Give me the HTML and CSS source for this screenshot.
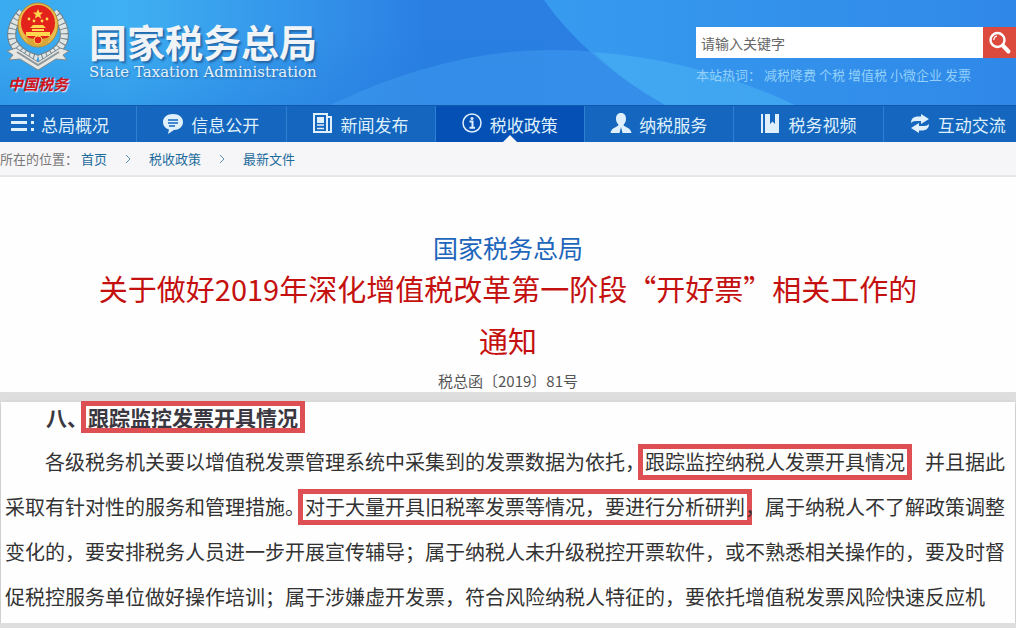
FILE: index.html
```html
<!DOCTYPE html>
<html lang="zh-CN">
<head>
    <meta charset="UTF-8">
    <meta name="viewport" content="width=device-width, initial-scale=1.0">
    <title>国家税务总局</title>
    <link rel="stylesheet" href="styles.css">
</head>
<body>
    <header class="header">
        <svg class="header-bg" viewBox="0 0 1016 105" preserveAspectRatio="none" aria-hidden="true">
            <defs>
                <linearGradient id="sky" x1="0" y1="0" x2="1" y2="0">
                    <stop offset="0" stop-color="#3aaaf0"/>
                    <stop offset="0.12" stop-color="#3fb0f2"/>
                    <stop offset="0.42" stop-color="#2b7fe3"/>
                    <stop offset="1" stop-color="#2b7fe3"/>
                </linearGradient>
                <linearGradient id="right" x1="0" y1="0" x2="1" y2="0">
                    <stop offset="0" stop-color="#379bef"/>
                    <stop offset="1" stop-color="#2f88e8"/>
                </linearGradient>
                <linearGradient id="shade" x1="0" y1="0" x2="0" y2="1">
                    <stop offset="0.3" stop-color="#1f78dc" stop-opacity="0"/>
                    <stop offset="1" stop-color="#1f78dc" stop-opacity="0.35"/>
                </linearGradient>
            </defs>
            <rect width="1016" height="105" fill="url(#sky)"/>
            <rect width="544" height="105" fill="url(#shade)"/>
            <path d="M544 0Q586 60 665 105H1016V0Z" fill="url(#right)"/>
            <path d="M330 105Q450 48 560 50Q578 50 594 52Q622 82 665 105Z" fill="#45a5f2" fill-opacity="0.4"/>
            <path d="M594 52Q700 60 795 105H665Q622 82 594 52Z" fill="#4db8f5" fill-opacity="0.5"/>
        </svg>
        <a class="brand" href="#">
            <span class="logo">
                <svg class="emblem" viewBox="0 0 66 70" aria-hidden="true">
                    <!-- wheat ears -->
                    <path d="M17 10Q3 26 8 40Q14 52 32 57" fill="none" stroke="#6f7f88" stroke-width="9"/>
                    <path d="M49 10Q63 26 58 40Q52 52 34 57" fill="none" stroke="#6f7f88" stroke-width="9"/>
                    <path d="M17 10Q3 26 8 40Q14 52 32 57" fill="none" stroke="#dfe4e4" stroke-width="7" stroke-dasharray="4 1"/>
                    <path d="M49 10Q63 26 58 40Q52 52 34 57" fill="none" stroke="#dfe4e4" stroke-width="7" stroke-dasharray="4 1"/>
                    <!-- ribbon -->
                    <path d="M2 49L11 46L33 60L55 46L64 49L58 53L62 58L51 57L33 68L15 57L4 58L8 53Z" fill="#e6e6e2" stroke="#7c8990" stroke-width="1"/>
                    <path d="M12 50L33 63L54 50" fill="none" stroke="#8d979b" stroke-width="2"/>
                    <!-- badge -->
                    <ellipse cx="33" cy="23" rx="20" ry="22" fill="#e9bd4c" stroke="#b98a2c" stroke-width="1"/>
                    <ellipse cx="33" cy="21" rx="17" ry="18" fill="#e3231b"/>
                    <path d="M33 7L34.4 10.6H38L35.2 12.9L36.2 16.5L33 14.4L29.8 16.5L30.8 12.9L28 10.6H31.6Z" fill="#ffd84f"/>
                    <g fill="#ffd84f">
                        <circle cx="24" cy="17" r="1.4"/>
                        <circle cx="29" cy="19" r="1.4"/>
                        <circle cx="37" cy="19" r="1.4"/>
                        <circle cx="42" cy="17" r="1.4"/>
                        <path d="M25 26L28 23H38L41 26ZM27 27H39V29H27ZM21 30H45V34H21Z"/>
                    </g>
                    <path d="M20 35Q33 39 46 35L42 42Q33 46 24 42Z" fill="#d9a63a"/>
                    <circle cx="33" cy="38" r="4" fill="#e3231b" stroke="#ffd84f" stroke-width="1"/>
                </svg>
                <span class="logo-text">中国税务</span>
            </span>
            <span class="site-name">
                <span class="site-name-cn">国家税务总局</span>
                <span class="site-name-en">State Taxation Administration</span>
            </span>
        </a>
        <div class="search">
            <form class="search-form">
                <input class="search-input" type="text" placeholder="请输入关键字" aria-label="请输入关键字">
                <button class="search-button" type="button" aria-label="搜索">
                    <svg width="24" height="24" viewBox="0 0 24 24" fill="none" stroke="#fff" aria-hidden="true">
                        <circle cx="9.5" cy="9" r="7" stroke-width="2.4"/>
                        <path d="M5.8 9Q6 5.6 9 5.2" stroke-width="1.2"/>
                        <path d="M14.8 14.5L20.5 20.5" stroke-width="4" stroke-linecap="round"/>
                    </svg>
                </button>
            </form>
            <div class="hot-words">
                <span>本站热词：</span>
                <a href="#">减税降费</a>
                <a href="#">个税</a>
                <a href="#">增值税</a>
                <a href="#">小微企业</a>
                <a href="#">发票</a>
            </div>
        </div>
    </header>

    <nav class="nav">
        <a class="nav-item" href="#">
            <svg class="nav-icon" viewBox="0 0 24 24" fill="currentColor"><path d="M0 2H16V5H0ZM0 9H16V12H0ZM0 16H16V19H0ZM20 2H23V5H20ZM20 9H23V12H20ZM20 16H23V19H20Z"/></svg>
            总局概况
        </a>
        <a class="nav-item" href="#">
            <svg class="nav-icon" viewBox="0 0 24 24"><path d="M12 2C18 2 22 5.5 22 10S18 18 13 18L7 22L8 17.5C4.5 16.5 2 13.8 2 10C2 5.5 6 2 12 2Z" fill="currentColor"/><path d="M7 8H17M7 11H17M8 14H14" stroke="#1466be" stroke-width="1.5"/></svg>
            信息公开
        </a>
        <a class="nav-item" href="#">
            <svg class="nav-icon" viewBox="0 0 24 24" fill="none" stroke="currentColor" stroke-width="2"><path d="M3 2H16V20H3ZM16 5H20V20H15"/><path d="M6 13H13M6 16.5H13" stroke-width="1.5"/><path d="M6 5H13V11H6Z" fill="currentColor" stroke="none"/></svg>
            新闻发布
        </a>
        <a class="nav-item active" href="#">
            <svg class="nav-icon" viewBox="0 0 24 24" fill="none" stroke="currentColor"><circle cx="12" cy="11" r="9" stroke-width="1.5"/><path d="M9.5 9.5H12.5V15.5M9.5 15.8H15" stroke-width="2"/><circle cx="12" cy="6.5" r="1.5" fill="currentColor" stroke="none"/></svg>
            税收政策
        </a>
        <a class="nav-item" href="#">
            <svg class="nav-icon" viewBox="0 0 24 24"><path d="M12 1C15.5 1 17 3.5 17 7C17 10 15.500 11.5 14.5 13C15 15 22 15.5 22.5 21H1.5C2 15.5 9 15 9.5 13C8.5 11.5 7 10 7 7C7 3.5 8.5 1 12 1Z" fill="currentColor"/><path d="M12 15L13.5 21H10.5Z" fill="#1466be"/></svg>
            纳税服务
        </a>
        <a class="nav-item" href="#">
            <svg class="nav-icon" viewBox="0 0 24 24" fill="currentColor"><path d="M3 2H5V21H3ZM7 2H12V12L14.5 9.5L17 12V2H21V21H7Z"/></svg>
            税务视频
        </a>
        <a class="nav-item" href="#">
            <svg class="nav-icon" viewBox="0 0 24 24" fill="currentColor"><path d="M3 11C3 6.500 6 4.5 10 4.500H13V2L21 7L13 12V9H10C7 9 5 9 3 11ZM21 12C21 16.500 18 18.500 14 18.500H11V21L3 16L11 11V14H14C17 14 19 14 21 12Z"/></svg>
            互动交流
        </a>
    </nav>

    <div class="breadcrumb">
        <span>所在的位置：</span>
        <a href="#">首页</a>
        <svg class="arrow" viewBox="0 0 8 10"><path d="M2 1L6 5L2 9"/></svg>
        <a href="#">税收政策</a>
        <svg class="arrow" viewBox="0 0 8 10"><path d="M2 1L6 5L2 9"/></svg>
        <a href="#">最新文件</a>
    </div>

    <main>
        <section class="title-block">
            <p class="issuer">国家税务总局</p>
            <h1>关于做好2019年深化增值税改革第一阶段“开好票”相关工作的通知</h1>
            <p class="doc-number">税总函〔2019〕81号</p>
        </section>

        <article class="article">
            <h2>八、<mark>跟踪监控发票开具情况</mark></h2>
            <p>各级税务机关要以增值税发票管理系统中采集到的发票数据为依托，<mark>跟踪监控纳税人发票开具情况</mark>　并且据此采取有针对性的服务和管理措施。<mark>对于大量开具旧税率发票等情况，要进行分析研判</mark>，属于纳税人不了解政策调整变化的，要安排税务人员进一步开展宣传辅导；属于纳税人未升级税控开票软件，或不熟悉相关操作的，要及时督促税控服务单位做好操作培训；属于涉嫌虚开发票，符合风险纳税人特征的，要依托增值税发票风险快速反应机</p>
        </article>
    </main>
</body>
</html>
```
FILE: styles.css
```css
* { box-sizing: border-box; }
body { margin: 0; font-family: "Noto Sans CJK SC", sans-serif; background-color: #dedede; color: #333; overflow-x: hidden; }
a { color: inherit; text-decoration: none; }
h1, h2, p { margin: 0; font-weight: normal; }

/* header */
.header { position: relative; display: flex; justify-content: space-between; height: 105px; }
.header-bg { position: absolute; top: 0; left: 0; width: 100%; height: 100%; z-index: -1; }
.brand { display: flex; gap: 18px; padding: 2px 0 0 5px; }
.logo { display: flex; flex-direction: column; align-items: center; width: 66px; }
.emblem { width: 66px; height: 70px; }
.logo-text { font-size: 15px; font-weight: bold; font-style: italic; line-height: 24px; color: #d3141c; text-shadow: 1px 1px 1px #ddeefa; }
.site-name { display: flex; flex-direction: column; padding-top: 18px; }
.site-name-cn { font-size: 38px; font-weight: bold; line-height: 42px; color: #f1f4f7; text-shadow: 2px 2px 2px #2468a8; }
.site-name-en { font-family: "DejaVu Serif", serif; font-size: 15px; line-height: 20px; color: #e4f1fb; text-shadow: 1px 1px 2px #2468a8; }

.search { width: 320px; padding-top: 27px; }
.search-form { display: flex; height: 31px; }
.search-input { flex: 1; min-width: 0; padding: 0 5px; border: 0; background-color: #fff; font-family: inherit; font-size: 14px; color: #555; }
.search-input::placeholder { color: #666; }
.search-button { display: flex; align-items: center; justify-content: center; width: 33px; padding: 0; border: 0; background-color: #dc4a3d; }
.hot-words { display: flex; gap: 3px; padding-top: 7px; font-size: 13px; line-height: 20px; color: #92d0fa; white-space: nowrap; }

/* nav */
.nav { display: grid; grid-template-columns: 136fr repeat(5, 149fr) 133fr; height: 37px; background-color: #1466be; border-top: 1px solid #1059ab; overflow: hidden; }
.nav-item { position: relative; display: flex; align-items: center; gap: 6px; padding-left: 24px; border-left: 1px solid #2f7fd0; font-size: 17px; color: #dff0fc; white-space: nowrap; }
.nav-item:first-child { padding-left: 11px; border-left: 0; }
.nav-icon { flex: none; width: 24px; height: 24px; }
.active { background-color: #0450b4; }
.active::after { content: ""; position: absolute; left: 50%; bottom: 0; margin-left: -7px; border: 7px solid transparent; border-top: 0; border-bottom-color: #f7f7f9; }

/* breadcrumb */
.breadcrumb { display: flex; align-items: center; height: 35px; background-color: #f6f6f8; border-bottom: 2px solid #e6e6e8; font-size: 13px; color: #777; }
.breadcrumb a { color: #1c6c9c; }
.breadcrumb span { padding-right: 3px; }
.arrow { width: 8px; height: 10px; margin: 0 17px; fill: none; stroke: #5c8fb0; }

/* document title */
.title-block { padding: 55px 88px 0; background-color: #fefefe; text-align: center; }
.issuer { font-size: 25px; line-height: 30px; color: #1d66bb; }
h1 { font-size: 29px; line-height: 52px; color: #c4100f; }
.doc-number { padding-top: 4px; font-size: 15px; line-height: 22px; color: #555; }

/* article */
.article { margin: 10px 1px 0; padding: 0 4px 4px; background-color: #fefefe; box-shadow: 0 2px 5px #bbb; }
h2 { padding-left: 41px; font-size: 21px; font-weight: bold; line-height: 30px; color: #3a3740; }
.article p { padding-top: 7px; font-size: 20px; line-height: 45px; text-indent: 40px; color: #333; }
mark { display: inline-block; line-height: 22px; text-indent: 0; background: none; color: inherit; outline: 5px solid #dd4f52; outline-offset: 2px; }
h2 mark { line-height: 18px; }
```
